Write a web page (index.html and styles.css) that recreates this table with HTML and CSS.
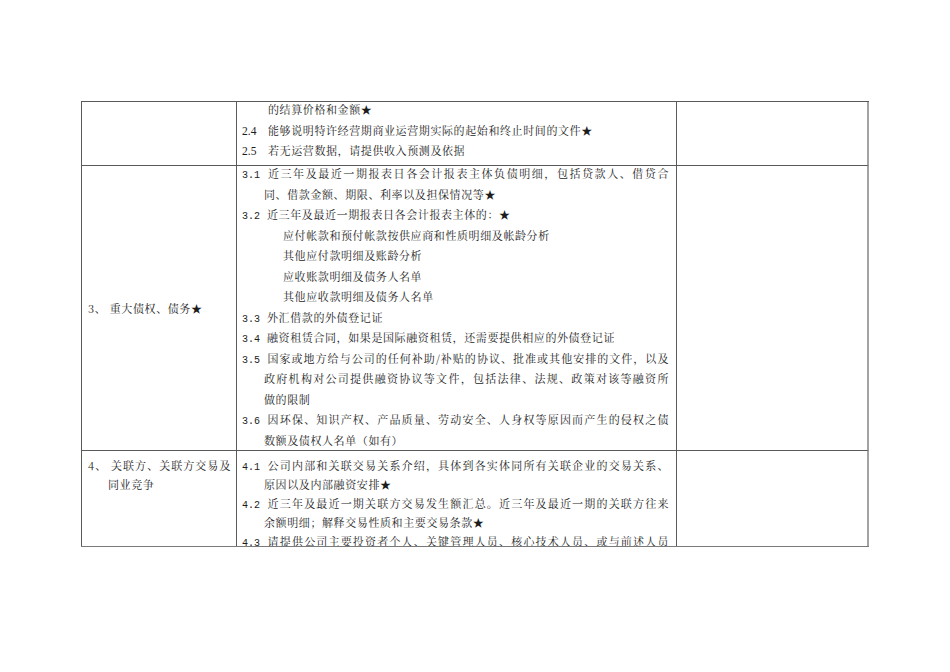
FILE: index.html
```html
<!DOCTYPE html>
<html lang="zh-CN">
<head>
<meta charset="utf-8">
<title>尽职调查资料清单</title>
<link rel="stylesheet" href="styles.css">
</head>
<body>
<div class="sheet">
  <table class="grid">
    <tr class="r1">
      <td class="c1"></td>
      <td class="c2">
        <div class="cell">
          <div class="ln cont1">的结算价格和金额★</div>
          <div class="ln"><span class="num n2">2.4</span>能够说明特许经营期商业运营期实际的起始和终止时间的文件★</div>
          <div class="ln"><span class="num n2">2.5</span>若无运营数据，请提供收入预测及依据</div>
        </div>
      </td>
      <td class="c3"></td>
    </tr>
    <tr class="r2">
      <td class="c1 mid"><div class="ln">3、 重大债权、债务★</div></td>
      <td class="c2">
        <div class="cell">
          <div class="ln j"><span class="num">3.1</span>近三年及最近一期报表日各会计报表主体负债明细，包括贷款人、借贷合</div>
          <div class="ln cont">同、借款金额、期限、利率以及担保情况等★</div>
          <div class="ln"><span class="num">3.2</span>近三年及最近一期报表日各会计报表主体的：★</div>
          <div class="ln sub">应付帐款和预付帐款按供应商和性质明细及帐龄分析</div>
          <div class="ln sub">其他应付款明细及账龄分析</div>
          <div class="ln sub">应收账款明细及债务人名单</div>
          <div class="ln sub">其他应收款明细及债务人名单</div>
          <div class="ln"><span class="num">3.3</span>外汇借款的外债登记证</div>
          <div class="ln"><span class="num">3.4</span>融资租赁合同，如果是国际融资租赁，还需要提供相应的外债登记证</div>
          <div class="ln j"><span class="num">3.5</span>国家或地方给与公司的任何补助/补贴的协议、批准或其他安排的文件，以及</div>
          <div class="ln cont j">政府机构对公司提供融资协议等文件，包括法律、法规、政策对该等融资所</div>
          <div class="ln cont">做的限制</div>
          <div class="ln j"><span class="num">3.6</span>因环保、知识产权、产品质量、劳动安全、人身权等原因而产生的侵权之债</div>
          <div class="ln cont">数额及债权人名单（如有）</div>
        </div>
      </td>
      <td class="c3"></td>
    </tr>
    <tr class="r3">
      <td class="c1 top">
        <div class="ln j">4、 关联方、关联方交易及</div>
        <div class="ln hang">同业竞争</div>
      </td>
      <td class="c2">
        <div class="ln j"><span class="num">4.1</span>公司内部和关联交易关系介绍，具体到各实体同所有关联企业的交易关系、</div>
        <div class="ln cont">原因以及内部融资安排★</div>
        <div class="ln j"><span class="num">4.2</span>近三年及最近一期关联方交易发生额汇总。近三年及最近一期的关联方往来</div>
        <div class="ln cont">余额明细；解释交易性质和主要交易条款★</div>
        <div class="ln j"><span class="num">4.3</span>请提供公司主要投资者个人、关键管理人员、核心技术人员、或与前述人员</div>
        <div class="ln cont">关系密切的家庭成员控制或施加重大影响的企业情况</div>
      </td>
      <td class="c3"></td>
    </tr>
  </table>
</div>
</body>
</html>
```

FILE: styles.css
```css
html, body {
  margin: 0;
  padding: 0;
  background: #ffffff;
}

body {
  font-family: "Noto Serif CJK SC", "Noto Sans CJK SC", "Noto Sans CJK JP", serif;
  font-size: 11px;
  letter-spacing: 0.6px;
  color: #1c1c1c;
}

.sheet {
  margin: 101px 0 0 81px;
  width: 788px;
  height: 445px;
  overflow: hidden;
  border-bottom: 1px solid #7a7a7a;
}

.grid {
  width: 788px;
  table-layout: fixed;
  border-collapse: separate;
  border-spacing: 0;
  border-top: 1px solid #5a5a5a;
  border-left: 1px solid #5a5a5a;
}

.grid td {
  box-sizing: border-box;
  padding: 0;
  vertical-align: top;
  border-right: 1px solid #5a5a5a;
  border-bottom: 1px solid #5a5a5a;
}

.grid td.c1 {
  width: 155px;
  padding-left: 6px;
  padding-right: 5px;
}

.grid td.c2 {
  width: 440px;
  padding-left: 5px;
  padding-right: 7px;
}

.grid td.c3 {
  width: 192px;
  border-right: 2px solid #a3a3a3;
}

.grid td.mid {
  vertical-align: middle;
}

.ln {
  height: 20.5px;
  line-height: 20.5px;
  white-space: nowrap;
  overflow: visible;
}

.ln.j {
  text-align: justify;
  text-align-last: justify;
}

.cell {
  margin-top: -3px;
}

.r1 td {
  padding-bottom: 4.5px;
}

.r3 td {
  padding-top: 4.5px;
}

.r3 .ln {
  height: 19px;
  line-height: 19px;
}

.num {
  display: inline-block;
  width: 25px;
  line-height: 1;
  font-family: "Liberation Mono", monospace;
  font-size: 10px;
  letter-spacing: 0;
}

.num.n2 {
  width: 26px;
  font-family: "Liberation Serif", serif;
  font-size: 11.5px;
}

.cont {
  padding-left: 22px;
}

.cont1 {
  padding-left: 26px;
}

.sub {
  padding-left: 41px;
}

.hang {
  padding-left: 20px;
}
```
